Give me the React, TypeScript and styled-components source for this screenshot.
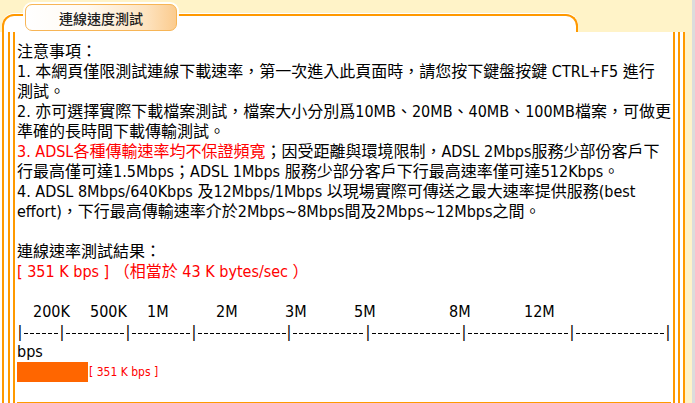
import React from "react";
import styled, { createGlobalStyle } from "styled-components";

const ORANGE = "#ff9900";
const BEIGE = "#fff3c8";
const RED = "#ff0000";

const Global = createGlobalStyle`
  html, body { margin: 0; padding: 0; background: ${BEIGE}; }
  body { width: 695px; height: 403px; overflow: hidden; }
`;

const Page = styled.div`
  display: flex;
  width: 695px;
  height: 403px;
  overflow: hidden;
  background: ${BEIGE};
  font-family: "DejaVu Sans Condensed", "DejaVu Sans", "Noto Sans CJK TC", sans-serif;
  font-size: 16px;
  color: #000;
`;

const Panel = styled.div`
  flex: 1;
  min-width: 0;
  display: flex;
  flex-direction: column;
`;

const GrayEdge = styled.div`
  width: 3px;
  background: #dcdcdc;
`;

const Header = styled.div`
  height: 32px;
  flex: none;
  display: flex;
  align-items: flex-end;
  padding-left: 2px;
`;

const FrameTop = styled.div`
  position: relative;
  width: 572px;
  height: 16px;
  border: 2px solid ${ORANGE};
  border-bottom: none;
  border-radius: 12px 12px 0 0;
  background: #fff;
  box-shadow: 0 -1px 0 #fff;
`;

const Tab = styled.div`
  position: absolute;
  left: 21px;
  top: -12px;
  width: 152px;
  height: 27px;
  box-sizing: border-box;
  border: 1px solid #f7b556;
  border-radius: 7px;
  background: linear-gradient(to right, #ffffff 0%, #fffaf2 40%, #fde3bf 80%, #fbcb8e 100%);
  box-shadow: 0 0 0 2px rgba(255, 255, 255, 0.95);
  display: flex;
  align-items: center;
  justify-content: center;
  font-family: "Noto Sans CJK TC", sans-serif;
  font-size: 14px;
  font-weight: 500;
  color: #1e1e1e;
`;

const Body = styled.div`
  flex: 1;
  display: flex;
  background: #fff;
`;

const Rail = styled.div`
  display: flex;
  flex: none;
  padding-left: 2px;
`;

const Stripe = styled.div<{ $gap?: number }>`
  width: 2px;
  margin-left: ${(p) => p.$gap ?? 0}px;
  background: ${ORANGE};
`;

const RailSpacer = styled.div`
  width: 2px;
`;

const BeigeFill = styled.div`
  width: 7px;
  background: ${BEIGE};
`;

const Content = styled.div`
  flex: 1;
  min-width: 0;
  align-self: flex-start;
  padding: 10px 0 20px;
  border-bottom: 2px solid ${ORANGE};
`;

const Line = styled.div<{ $red?: boolean }>`
  height: 20px;
  line-height: 20px;
  white-space: nowrap;
  color: ${(p) => (p.$red ? RED : "inherit")};
`;

const Red = styled.span`
  color: ${RED};
`;

const LabelRow = styled.div`
  display: flex;
  height: 20px;
  line-height: 20px;
  padding-left: 16px;
  white-space: nowrap;
`;

const LabelSlot = styled.span<{ $w?: number }>`
  flex: none;
  width: ${(p) => (p.$w ? `${p.$w}px` : "auto")};
`;

const DashRow = styled.div`
  display: flex;
  height: 20px;
  line-height: 20px;
`;

const Segment = styled.div<{ $w?: number }>`
  flex: none;
  display: flex;
  width: ${(p) => (p.$w ? `${p.$w}px` : "auto")};
`;

const Pipe = styled.span`
  width: 6px;
  flex: none;
  text-align: center;
`;

const Dashes = styled.span`
  flex: 1;
  height: 1px;
  margin-top: 11px;
  background: repeating-linear-gradient(to right, transparent 0 1px, #000 1px 5px, transparent 5px 6px);
`;

const BarRow = styled.div`
  display: flex;
  align-items: center;
  height: 20px;
`;

const Bar = styled.div<{ $w: number }>`
  width: ${(p) => p.$w}px;
  height: 20px;
  background: #ff6600;
`;

const BarText = styled.span`
  margin-left: 1px;
  font-size: 12px;
  color: ${RED};
  white-space: nowrap;
`;

const labels: { text: string; w?: number }[] = [
  { text: "200K", w: 57 },
  { text: "500K", w: 57 },
  { text: "1M", w: 69 },
  { text: "2M", w: 69 },
  { text: "3M", w: 69 },
  { text: "5M", w: 95 },
  { text: "8M", w: 75 },
  { text: "12M" },
];

const segments = [42, 66, 66, 95, 79, 96, 108, 96];

export default function App() {
  return (
    <>
      <Global />
      <Page>
        <Panel>
          <Header>
            <FrameTop>
              <Tab>連線速度測試</Tab>
            </FrameTop>
          </Header>
          <Body>
            <Rail>
              <Stripe />
              <Stripe $gap={4} />
              <Stripe $gap={3} />
              <RailSpacer />
            </Rail>
            <Content>
              <Line>注意事項：</Line>
              <Line>1. 本網頁僅限測試連線下載速率，第一次進入此頁面時，請您按下鍵盤按鍵 CTRL+F5 進行</Line>
              <Line>測試。</Line>
              <Line>2. 亦可選擇實際下載檔案測試，檔案大小分別爲10MB、20MB、40MB、100MB檔案，可做更</Line>
              <Line>準確的長時間下載傳輸測試。</Line>
              <Line>
                <Red>3. ADSL各種傳輸速率均不保證頻寬</Red>；因受距離與環境限制，ADSL 2Mbps服務少部份客戶下
              </Line>
              <Line>行最高僅可達1.5Mbps；ADSL 1Mbps 服務少部分客戶下行最高速率僅可達512Kbps。</Line>
              <Line>4. ADSL 8Mbps/640Kbps 及12Mbps/1Mbps 以現場實際可傳送之最大速率提供服務(best</Line>
              <Line>effort)，下行最高傳輸速率介於2Mbps~8Mbps間及2Mbps~12Mbps之間。</Line>
              <Line />
              <Line>連線速率測試結果：</Line>
              <Line $red>[ 351 K bps ] （相當於 43 K bytes/sec ）</Line>
              <Line />
              <LabelRow>
                {labels.map((l) => (
                  <LabelSlot key={l.text} $w={l.w}>
                    {l.text}
                  </LabelSlot>
                ))}
              </LabelRow>
              <DashRow>
                {segments.map((w, i) => (
                  <Segment key={i} $w={w}>
                    <Pipe>|</Pipe>
                    <Dashes />
                  </Segment>
                ))}
                <Segment>
                  <Pipe>|</Pipe>
                </Segment>
              </DashRow>
              <Line>bps</Line>
              <BarRow>
                <Bar $w={71} />
                <BarText>[ 351 K bps ]</BarText>
              </BarRow>
            </Content>
            <Rail>
              <Stripe />
              <Stripe $gap={3} />
              <Stripe $gap={3} />
              <BeigeFill />
            </Rail>
          </Body>
        </Panel>
        <GrayEdge />
      </Page>
    </>
  );
}
